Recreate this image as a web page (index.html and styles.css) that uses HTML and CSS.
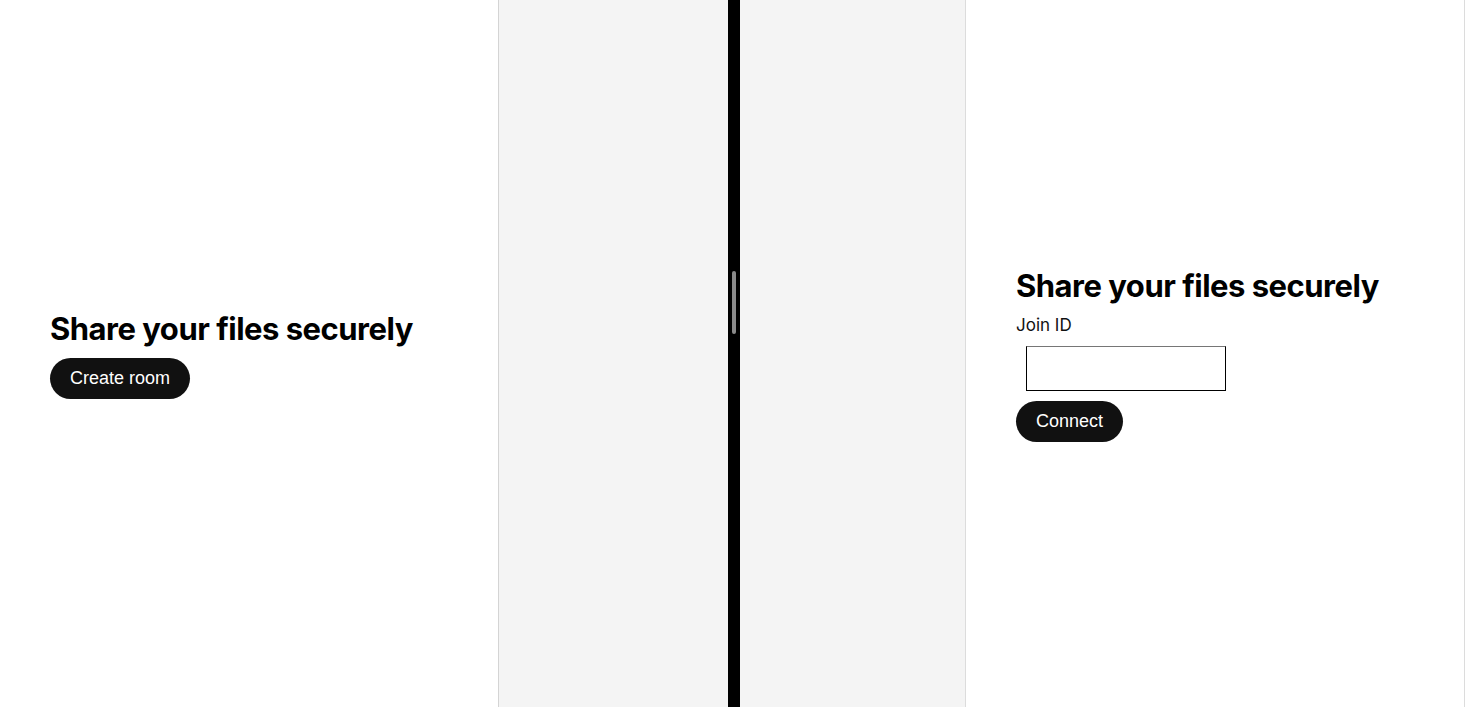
FILE: index.html
```html
<!DOCTYPE html>
<html lang="en">
  <head>
    <meta charset="UTF-8">
    <meta name="viewport" content="width=device-width, initial-scale=1.0">
    <title>Share</title>
    <link rel="stylesheet" href="styles.css">
  </head>
  <body>

    <div id="split">

      <div class="half half-left">
        <div class="frame frame-left">
          <div class="panel">
            <h1 class="title">Share your files securely</h1>
            <button class="pill">Create room</button>
          </div>
        </div>
      </div>

      <div id="divider">
        <div id="handle"></div>
      </div>

      <div class="half half-right">
        <div class="frame frame-right">
          <div class="panel">
            <h1 class="title">Share your files securely</h1>
            <label class="join-label" for="join-id">Join ID</label>
            <input id="join-id" class="join-input" type="text">
            <button class="pill">Connect</button>
          </div>
        </div>
      </div>

    </div>

  </body>
</html>
```

FILE: styles.css
```css
html, body {
  margin: 0;
  padding: 0;
  box-sizing: border-box;
}
*, *:before, *:after {
  box-sizing: inherit;
}
body {
  width: 100vw;
  height: 100vh;
  overflow: hidden;
  font-family: Inter, 'Noto Sans', sans-serif;
  color: #000;
  background-color: #f4f4f4;
}
#split {
  display: flex;
  height: 100%;
}
.half {
  display: flex;
  height: 100%;
}
.half-left {
  width: 728px;
  justify-content: flex-start;
}
.half-right {
  flex: 1;
  justify-content: flex-end;
}
#divider {
  width: 12px;
  height: 100%;
  background-color: #000;
  display: flex;
  justify-content: center;
}
#handle {
  width: 4px;
  height: 63px;
  margin-top: 271px;
  border-radius: 2px;
  background-color: #8a8a8a;
}
.frame {
  width: 499px;
  height: 100%;
  background-color: #fff;
  display: flex;
  align-items: center;
  padding: 0 50px;
}
.frame-left {
  border-right: 1px solid #d4d4d4;
}
.frame-right {
  width: 500px;
  border-left: 1px solid #dcdcdc;
  border-right: 1px solid #dcdcdc;
}
.panel {
  display: flex;
  flex-direction: column;
  align-items: flex-start;
  gap: 10px;
}
.title {
  margin: 0;
  font-size: 31px;
  line-height: 39px;
  font-weight: 700;
  letter-spacing: -0.5px;
}
.join-label {
  font-size: 17px;
  line-height: 21px;
  color: #111;
}
.join-input {
  width: 200px;
  height: 45px;
  margin-left: 10px;
  border: 1px solid #000;
  border-top-color: #767676;
  border-radius: 0;
  outline: none;
}
.pill {
  font-family: 'Liberation Sans', Arial, sans-serif;
  font-size: 18px;
  line-height: 21px;
  padding: 10px 20px;
  border: none;
  border-radius: 21px;
  background-color: #111;
  color: #fff;
}
```
